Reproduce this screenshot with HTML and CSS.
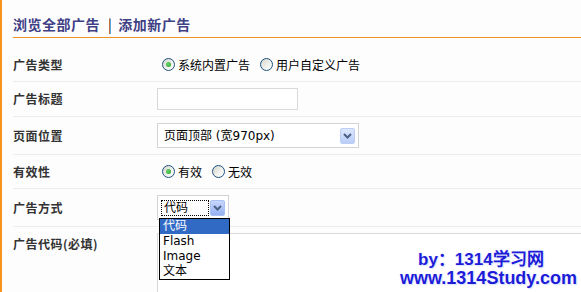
FILE: index.html
```html
<!DOCTYPE html>
<html lang="zh-CN">
<head>
<meta charset="utf-8">
<title>添加新广告</title>
<link rel="stylesheet" href="styles.css">
</head>
<body>
<div class="page">
  <div class="header"><a class="hlink">浏览全部广告</a><span class="sep">|</span><a class="hlink">添加新广告</a></div>
  <div class="form">
    <div class="row">
      <div class="label">广告类型</div>
      <div class="field">
        <span class="radio checked"></span><span class="rtext">系统内置广告</span>
        <span class="radio"></span><span class="rtext">用户自定义广告</span>
      </div>
    </div>
    <div class="row">
      <div class="label">广告标题</div>
      <div class="field"><span class="input"></span></div>
    </div>
    <div class="row">
      <div class="label">页面位置</div>
      <div class="field">
        <div class="select wide"><span class="seltext">页面顶部 (宽970px)</span><span class="arrow"><svg width="9" height="6" viewBox="0 0 9 6"><path d="M1 1 L4.5 4.5 L8 1" fill="none" stroke="#4d6185" stroke-width="2"/></svg></span></div>
      </div>
    </div>
    <div class="row">
      <div class="label">有效性</div>
      <div class="field">
        <span class="radio checked"></span><span class="rtext">有效</span>
        <span class="radio"></span><span class="rtext">无效</span>
      </div>
    </div>
    <div class="row">
      <div class="label">广告方式</div>
      <div class="field">
        <div class="select narrow"><span class="seltext focus">代码</span><span class="arrow hot"><svg width="9" height="6" viewBox="0 0 9 6"><path d="M1 1 L4.5 4.5 L8 1" fill="none" stroke="#4d6185" stroke-width="2"/></svg></span></div>
      </div>
    </div>
    <div class="row last">
      <div class="label">广告代码(必填)</div>
      <div class="field"><span class="textarea"></span></div>
    </div>
  </div>
  <ul class="dropdown">
    <li class="sel">代码</li>
    <li>Flash</li>
    <li>Image</li>
    <li>文本</li>
  </ul>
  <div class="mark">
    <div class="m1">by：1314学习网</div>
    <div class="m2">www.1314Study.com</div>
  </div>
</div>
</body>
</html>
```
FILE: styles.css
```css
html, body {
  margin: 0;
  padding: 0;
  background: #fdfdfd;
  overflow: hidden;
}
.page {
  position: relative;
  width: 581px;
  height: 292px;
  box-sizing: border-box;
  border-left: 2px solid #f7941d;
  padding-left: 11px;
  overflow: hidden;
  font-family: "Noto Sans CJK SC", sans-serif;
  font-size: 12px;
  color: #000;
}
.header {
  padding-top: 14px;
  padding-bottom: 3px;
  line-height: 20px;
  border-bottom: 1px solid #f0921e;
  margin-bottom: 10px;
  font-size: 14px;
  font-weight: bold;
  color: #3f3f86;
  letter-spacing: 0.5px;
}
.sep {
  font-weight: normal;
  color: #000;
  margin: 0 6px 0 8px;
}
.row {
  display: flex;
  align-items: center;
  padding: 6px 0;
  border-bottom: 1px solid #ececec;
}
.row.last {
  align-items: flex-start;
  border-bottom: none;
  padding-bottom: 0;
}
.label {
  width: 144px;
  flex: none;
  font-weight: bold;
  color: #333;
  line-height: 20px;
  letter-spacing: 0.5px;
}
.row.last .label { padding-top: 1px; }
.field {
  flex: 1;
  display: flex;
  align-items: center;
  min-height: 21px;
}
.radio {
  width: 11px;
  height: 11px;
  border: 1px solid #1c5180;
  border-radius: 50%;
  margin-left: 5px;
  margin-right: 3px;
  background: linear-gradient(135deg, #d6d6ce 0%, #f2f2ee 60%, #fff 100%);
  position: relative;
  flex: none;
}
.radio + .rtext + .radio { margin-left: 10px; }
.radio.checked::after {
  content: "";
  position: absolute;
  left: 3px;
  top: 3px;
  width: 5px;
  height: 5px;
  border-radius: 50%;
  background: radial-gradient(circle at 40% 40%, #6cd46c, #21a121);
}
.rtext {
  line-height: 21px;
}
.input {
  display: block;
  width: 139px;
  height: 20px;
  border: 1px solid #d9d9d9;
  background: #fff;
}
.select {
  display: flex;
  align-items: center;
  box-sizing: border-box;
  border: 1px solid #d3d3d3;
  background: #fff;
  height: 25px;
}
.select.wide { width: 202px; padding: 0 3px 0 6px; }
.select.narrow { width: 72px; padding: 0 3px 0 3px; }
.seltext {
  flex: 1;
  font-family: "DejaVu Sans", "Noto Sans CJK SC", sans-serif;
  font-size: 12px;
  line-height: 16px;
  white-space: nowrap;
}
.seltext.focus {
  outline: 1px dotted #000;
  outline-offset: -1px;
  padding-left: 3px;
  height: 16px;
  margin-right: 1px;
}
.arrow {
  width: 15px;
  height: 16px;
  box-sizing: border-box;
  border: 1px solid #bccef5;
  background: linear-gradient(#dde7fd, #b9cdf7);
  border-radius: 2px;
  display: flex;
  align-items: center;
  justify-content: center;
  flex: none;
}
.arrow.hot {
  background: linear-gradient(#c7d6fc, #96b1f3);
  border-color: #a9c0f3;
}
.textarea {
  display: block;
  width: 440px;
  height: 58px;
  border-top: 1px solid #d9d9d9;
  border-left: 1px solid #d9d9d9;
  background: #fff;
}
.dropdown {
  position: absolute;
  left: 157px;
  top: 218px;
  width: 69px;
  margin: 0;
  padding: 0;
  list-style: none;
  border: 1px solid #000;
  background: #fff;
  font-family: "DejaVu Sans", "Noto Sans CJK SC", sans-serif;
  font-size: 12px;
}
.dropdown li {
  height: 15px;
  line-height: 15px;
  padding-left: 3px;
}
.dropdown li.sel {
  background: #316ac5;
  color: #fff;
}
.mark {
  position: absolute;
  left: 398px;
  top: 250px;
  font-family: "Liberation Sans", Arial, sans-serif;
  font-weight: bold;
  font-size: 18px;
  color: #1c1cd8;
  text-shadow: 0 0 2px #fff, 0 0 2px #dfe6ff, 1px 1px 1px #cfd8ff;
  line-height: 19px;
}
.m1 { padding-left: 18px; font-size: 17px; }
.m1, .m2 { white-space: nowrap; }
```
